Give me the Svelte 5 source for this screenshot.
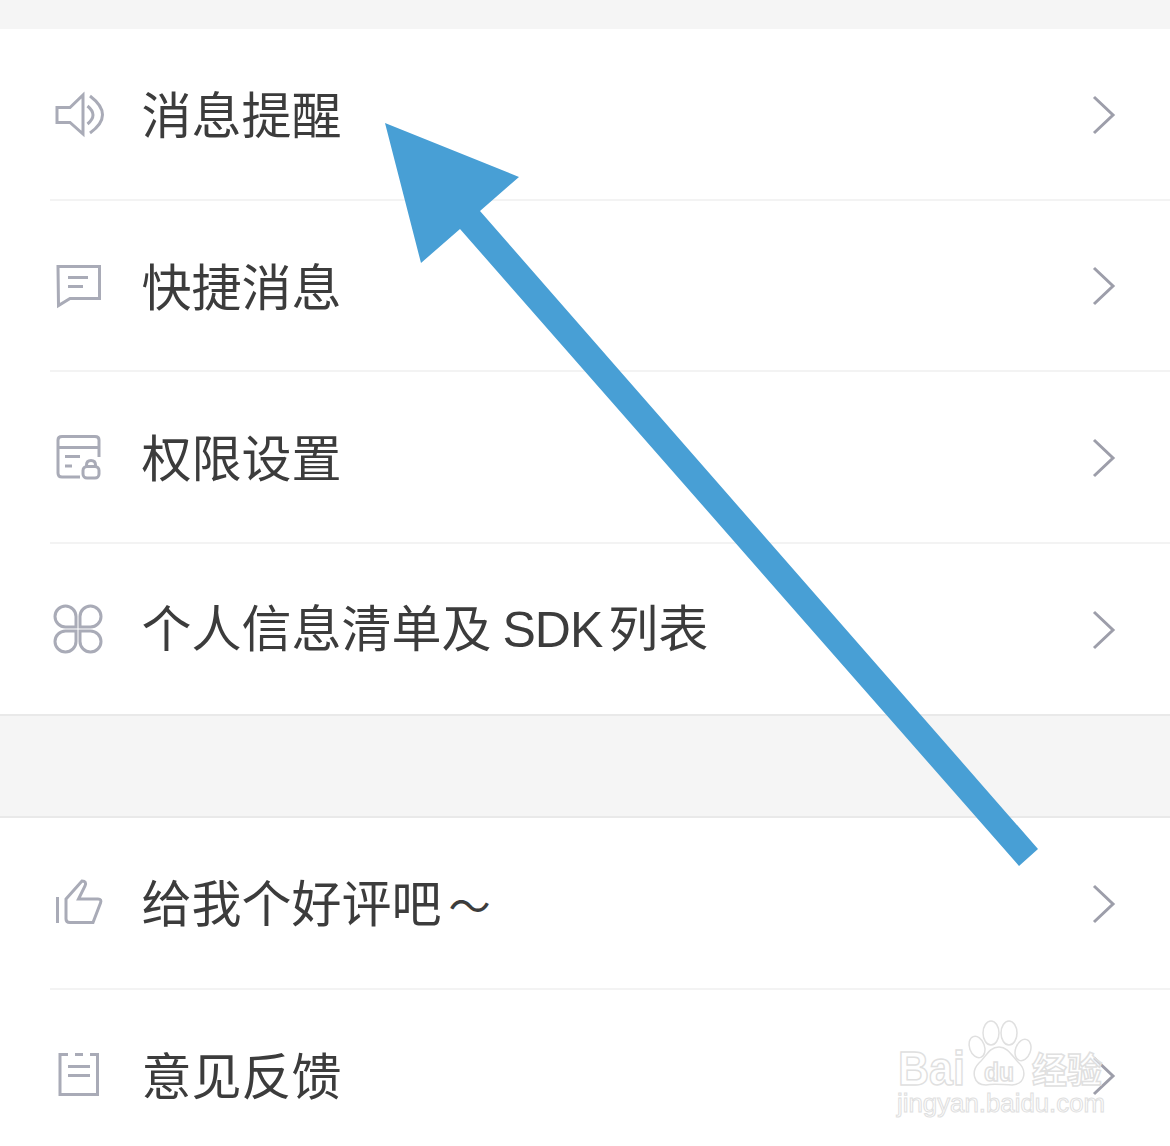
<script>
  const topRows = [
    { icon: 'speaker', label: '消息提醒' },
    { icon: 'chat', label: '快捷消息' },
    { icon: 'lock', label: '权限设置' },
    { icon: 'clover', label: '个人信息清单及', latin: 'SDK', after: '列表' },
  ];
  const bottomRows = [
    { icon: 'thumb', label: '给我个好评吧', tilde: true },
    { icon: 'note', label: '意见反馈' },
  ];
</script>

{#snippet rowIcon(name)}
  <svg class="icon" viewBox="0 0 56 56" fill="none" stroke="currentColor" stroke-width="3" aria-hidden="true">
    {#if name === 'speaker'}
      <path d="M7 21.5V36.5H20L33 48V9L20 21.5Z" />
      <path d="M37.5 20Q48.5 29 37.5 38" />
      <path d="M40 10Q65 29 40 47" />
    {:else if name === 'chat'}
      <path d="M8 9.5H49.5V41.5H20L8.5 48.5Z" />
      <path d="M18 20.5H38M18 29.5H33" />
    {:else if name === 'lock'}
      <path d="M30 48H12Q8 48 8 44V11Q8 7.5 12 7.5H45Q49 7.5 49 11V28" />
      <path d="M8 18.5H49M15 27.5H30M15 37H22" />
      <rect x="33" y="37.5" width="16" height="11.5" rx="4" />
      <path d="M36.5 37.5V36Q36.5 31.5 41 31.5Q45.5 31.5 45.5 36V37.5" />
    {:else if name === 'clover'}
      <path d="M26 26H15.5A10.5 10.5 0 1 1 26 15.5Z" />
      <path d="M30 26H40.5A10.5 10.5 0 1 0 30 15.5Z" />
      <path d="M26 30H15.5A10.5 10.5 0 1 0 26 40.5Z" />
      <path d="M30 30H40.5A10.5 10.5 0 1 1 30 40.5Z" />
    {:else if name === 'thumb'}
      <path d="M7.5 22V48" />
      <path d="M16 24L32 6Q37 6 35 11L28.5 24H48Q52 24 50.5 28L43 47.5H20Q16 47.5 16 44Z" />
    {:else if name === 'note'}
      <path d="M18 7.5H10V47.5H47.5V7.5H40M25 7.5H33" />
      <path d="M18 19.5H40M18 28.5H40" />
    {/if}
  </svg>
{/snippet}

{#snippet chevron()}
  <svg class="chevron" viewBox="0 0 24 40" fill="none" stroke="currentColor" stroke-width="3" aria-hidden="true">
    <path d="M2 2L21 20L2 38" />
  </svg>
{/snippet}

{#snippet row(item)}
  <div class="row">
    {@render rowIcon(item.icon)}
    <span class="label">
      {item.label}{#if item.latin}<span class="latin-run">{item.latin}</span>{item.after}{/if}{#if item.tilde}<span class="tilde">～</span>{/if}
    </span>
    {@render chevron()}
  </div>
{/snippet}

<div class="page">
  <div class="cap"></div>
  <section class="group">
    {#each topRows as item}
      {@render row(item)}
    {/each}
  </section>
  <div class="gap"></div>
  <section class="group">
    {#each bottomRows as item}
      {@render row(item)}
    {/each}
  </section>

  <svg class="watermark" viewBox="890 1020 280 110" aria-hidden="true">
    <g class="mark">
      <ellipse cx="977" cy="1047" rx="7.5" ry="11" transform="rotate(-20 977 1047)" />
      <ellipse cx="991" cy="1033" rx="8" ry="12" />
      <ellipse cx="1009" cy="1033" rx="8" ry="12" />
      <ellipse cx="1023" cy="1050" rx="7.5" ry="11" transform="rotate(20 1023 1050)" />
      <path d="M999 1047C1008 1047 1012 1056 1018 1062C1027 1070 1026 1084 1012 1085C1004 1085 994 1083 986 1085C973 1085 971 1071 979 1063C986 1057 989 1047 999 1047Z" />
      <text class="latin" x="898" y="1085" font-size="48" textLength="67" lengthAdjust="spacingAndGlyphs">Bai</text>
      <text class="latin" x="984" y="1081" font-size="25" textLength="30" lengthAdjust="spacingAndGlyphs">du</text>
      <text class="cjk" x="1032" y="1083" font-size="35">经验</text>
      <text class="latin thin" x="897" y="1112" font-size="25" textLength="208" lengthAdjust="spacingAndGlyphs">jingyan.baidu.com</text>
    </g>
  </svg>

  <svg class="arrow" viewBox="0 0 1170 1146" aria-hidden="true">
    <polygon points="385,123 519,177 480,211 1038,849 1019,866 460,229 421,263" />
  </svg>
</div>

<style>
  :global(body) {
    margin: 0;
    background: #fff;
  }
  .page {
    position: relative;
    width: 1170px;
    height: 1146px;
    overflow: hidden;
    background: #fff;
    font-family: "Noto Sans CJK SC", "Liberation Sans", sans-serif;
  }
  .cap {
    height: 29px;
    background: #f5f5f5;
  }
  .gap {
    box-sizing: border-box;
    height: 104px;
    margin-top: -1px;
    background: #f5f5f5;
    border-top: 2px solid #e9e9e9;
    border-bottom: 2px solid #e9e9e9;
  }
  .group .row:last-child {
    border-bottom-color: transparent;
  }
  .row {
    box-sizing: border-box;
    height: 171.6px;
    margin-left: 50px;
    padding-right: 54px;
    display: flex;
    align-items: center;
    border-bottom: 2px solid #f3f3f3;
  }
  .icon {
    width: 56px;
    height: 56px;
    flex: none;
    color: #a9abb7;
  }
  .label {
    margin-left: 35.5px;
    margin-bottom: 3px;
    flex: 1;
    font-size: 50px;
    line-height: 60px;
    color: #3c3c3c;
    white-space: nowrap;
  }
  .latin-run {
    margin: 0 6px 0 11px;
    font-family: "Liberation Sans", sans-serif;
    letter-spacing: -1px;
  }
  .tilde {
    margin-left: 7px;
    font-size: 42px;
  }
  .chevron {
    width: 24px;
    height: 40px;
    flex: none;
    margin-top: 2px;
    color: #9d9eaa;
  }
  .watermark {
    position: absolute;
    left: 890px;
    top: 1020px;
    width: 280px;
    height: 110px;
  }
  .mark > * {
    fill: rgba(255, 255, 255, 0.55);
    stroke: #e0e0e0;
    stroke-width: 1.5;
  }
  .latin {
    font-family: "Liberation Sans", sans-serif;
    font-weight: 700;
  }
  .thin {
    font-weight: 400;
    stroke-width: 1;
  }
  .cjk {
    font-family: "Noto Sans CJK SC", sans-serif;
    font-weight: 700;
  }
  .arrow {
    position: absolute;
    inset: 0;
    width: 1170px;
    height: 1146px;
  }
  .arrow polygon {
    fill: #489fd5;
  }
</style>
